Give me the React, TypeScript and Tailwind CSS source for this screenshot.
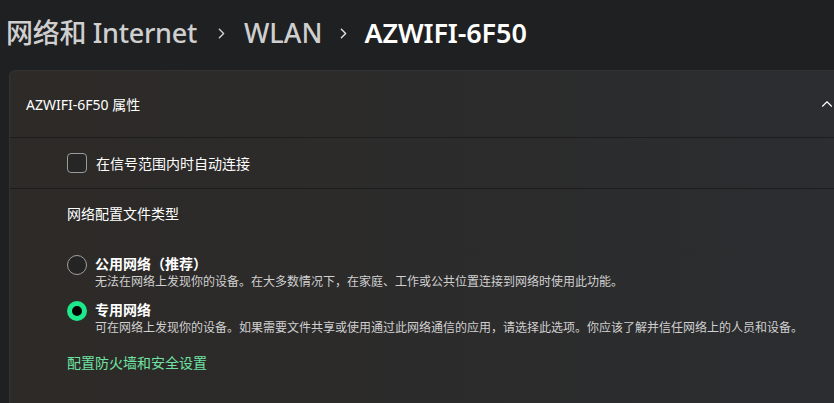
import React from 'react';
import { ChevronRight, ChevronUp } from 'lucide-react';

const font = "font-['Noto_Sans','Noto_Sans_CJK_SC',sans-serif]";

const Divider: React.FC = () => <div className="h-px bg-[#1d1d1d]" />;

export default function App() {
  return (
    <div className={`w-[834px] h-[403px] overflow-hidden bg-[#1f2021] ${font} text-white`}>
      {/* Breadcrumb */}
      <div className="h-[70px] flex items-center pl-[6px] pb-[4px]">
        <span className="text-[27px] font-medium text-[#cfcfcf] tracking-[-0.3px]">网络和 Internet</span>
        <ChevronRight className="ml-[16px] mr-[14px] text-[#cfcfcf]" size={17} strokeWidth={2} />
        <span className="text-[27px] font-medium text-[#cfcfcf] tracking-[0px]">WLAN</span>
        <ChevronRight className="ml-[13px] mr-[12px] text-[#e0e0e0]" size={17} strokeWidth={2} />
        <span className="text-[27px] font-semibold text-white tracking-[-0.1px]">AZWIFI-6F50</span>
      </div>

      {/* Card */}
      <div className="ml-[9px] w-[840px] h-[340px] rounded-tl-[6px] bg-gradient-to-r from-[#2d2a27] to-[#2b2d30] border-l border-t border-[#333]">
        <div className="h-[66px] flex items-center pl-[16px] relative">
          <span className="text-[14px] text-white">AZWIFI-6F50 属性</span>
          <ChevronUp className="absolute left-[808px] top-[24px] text-white" size={18} strokeWidth={1.5} />
        </div>
        <Divider />
        <div className="h-[50px] flex items-center pl-[57px] gap-[9px]">
          <div className="w-[20px] h-[20px] rounded-[4px] border border-[#9b9b9b] bg-[#262626]" />
          <span className="text-[14px] text-white">在信号范围内时自动连接</span>
        </div>
        <Divider />
        <div className="pl-[57px] pt-[15px]">
          <div className="text-[14px] text-white leading-[20px]">网络配置文件类型</div>

          <div className="mt-[21px] flex gap-[8px]">
            <div className="mt-[10px] w-[20px] h-[20px] rounded-full border border-[#a0a0a0] bg-[#242424] shrink-0" />
            <div className="flex flex-col">
              <span className="text-[14px] font-semibold leading-[20px] mt-[9px]">公用网络（推荐）</span>
              <span className="text-[12px] text-[#d0d0d0] leading-[16px]">
                无法在网络上发现你的设备。在大多数情况下，在家庭、工作或公共位置连接到网络时使用此功能。
              </span>
            </div>
          </div>

          <div className="mt-[1px] flex gap-[8px]">
            <div className="mt-[10px] w-[20px] h-[20px] rounded-full border-[5px] border-[#1de88c] bg-black shrink-0" />
            <div className="flex flex-col">
              <span className="text-[14px] font-semibold leading-[20px] mt-[9px]">专用网络</span>
              <span className="text-[12px] text-[#d0d0d0] leading-[16px]">
                可在网络上发现你的设备。如果需要文件共享或使用通过此网络通信的应用，请选择此选项。你应该了解并信任网络上的人员和设备。
              </span>
            </div>
          </div>

          <div className="mt-[17px] text-[14px] text-[#6ee3a3] leading-[20px]">配置防火墙和安全设置</div>
        </div>
      </div>
    </div>
  );
}
